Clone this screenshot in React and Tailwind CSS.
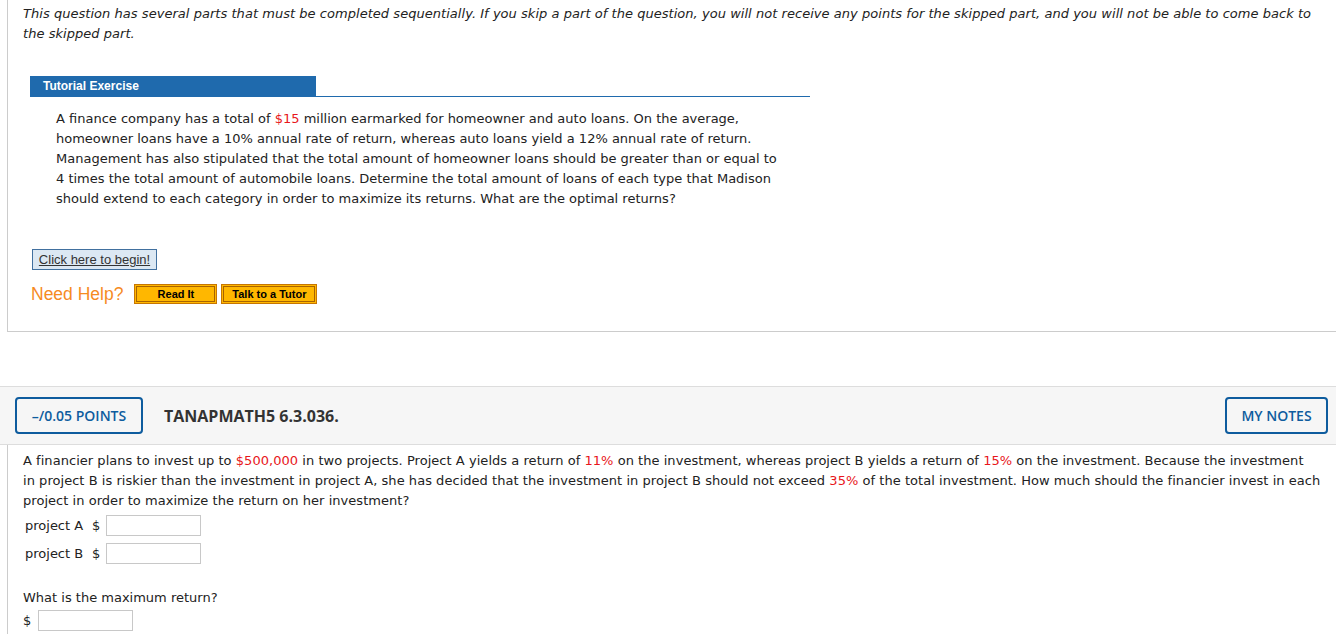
import React from 'react';

const verdana = { fontFamily: '"DejaVu Sans", Verdana, sans-serif' };

const Red = ({ children }) => <span className="text-[#e8161b]">{children}</span>;

const HelpButton = ({ label, width }) => (
  <button
    className={`h-[20px] ${width} border border-[#c77600] bg-[#ffb700] p-[1px] font-['Liberation_Sans',Arial,sans-serif] text-[11px] font-bold text-black`}
  >
    <span className="flex h-full w-full items-center justify-center border border-[#a86300]">{label}</span>
  </button>
);

const AnswerBox = () => (
  <span className="inline-block h-[21px] w-[95px] border border-[#c8c8c8] bg-white align-middle"></span>
);

export default function App() {
  return (
    <div className="min-h-[634px] w-[1336px] overflow-hidden bg-white text-[13px] leading-[20px] text-[#222]" style={verdana}>
      {/* previous question tail */}
      <div className="ml-[7px] h-[332px] border-b border-l border-[#cccccc] pl-[15px] pt-[4px]">
        <p className="whitespace-nowrap italic tracking-[0.04px]">
          This question has several parts that must be completed sequentially. If you skip a part of the question, you will not receive any points for the skipped part, and you will not be able to come back to
          <br />
          the skipped part.
        </p>

        <div className="ml-[7px] mt-[32px] w-[780px]">
          <div className="border-b border-[#1f6aad]">
            <div className="h-[20px] w-[286px] bg-[#1f6aad] pl-[13px] font-['Liberation_Sans',Arial,sans-serif] text-[12px] font-bold leading-[20px] text-white">
              Tutorial Exercise
            </div>
          </div>
          <p className="mt-[12px] whitespace-nowrap pl-[26px]">
            A finance company has a total of <Red>$15</Red> million earmarked for homeowner and auto loans. On the average,
            <br />
            homeowner loans have a 10% annual rate of return, whereas auto loans yield a 12% annual rate of return.
            <br />
            Management has also stipulated that the total amount of homeowner loans should be greater than or equal to
            <br />
            4 times the total amount of automobile loans. Determine the total amount of loans of each type that Madison
            <br />
            should extend to each category in order to maximize its returns. What are the optimal returns?
          </p>
        </div>

        <button className="ml-[9px] mt-[40px] h-[21px] w-[125px] border border-[#41709f] bg-[#dce8f3] font-['Liberation_Sans',Arial,sans-serif] text-[13px] leading-[19px] text-[#333] underline">
          Click here to begin!
        </button>

        <div className="ml-[8px] mt-[14px] flex items-center">
          <span className="mr-[11px] font-['Liberation_Sans',Arial,sans-serif] text-[17.5px] text-[#f68b1f]">Need Help?</span>
          <HelpButton label="Read It" width="w-[83px]" />
          <span className="w-[4px]"></span>
          <HelpButton label="Talk to a Tutor" width="w-[96px]" />
        </div>
      </div>

      {/* next question header */}
      <div className="mt-[54px] flex h-[59px] items-center justify-between border-y border-[#dddddd] bg-[#f6f6f6] pl-[15px] pr-[8px] font-['Open_Sans',sans-serif]">
        <div className="flex items-center">
          <span className="flex h-[37px] w-[128px] items-center justify-center rounded-[4px] border-2 border-[#0e5c9e] text-[14px] font-semibold text-[#0e5c9e]">
            –/0.05 POINTS
          </span>
          <span className="ml-[21px] text-[16px] font-bold text-[#333]">TANAPMATH5 6.3.036.</span>
        </div>
        <span className="flex h-[37px] w-[103px] items-center justify-center rounded-[4px] border-2 border-[#0e5c9e] text-[14px] font-semibold text-[#0e5c9e]">
          MY NOTES
        </span>
      </div>

      {/* question body */}
      <div className="ml-[7px] border-l border-[#cccccc] pb-[10px] pl-[15px] pt-[6px]">
        <p className="whitespace-nowrap tracking-[0.04px]">
          A financier plans to invest up to <Red>$500,000</Red> in two projects. Project A yields a return of <Red>11%</Red> on the investment, whereas project B yields a return of <Red>15%</Red> on the investment. Because the investment
          <br />
          in project B is riskier than the investment in project A, she has decided that the investment in project B should not exceed <Red>35%</Red> of the total investment. How much should the financier invest in each
          <br />
          project in order to maximize the return on her investment?
        </p>
        <div className="mt-[4px] flex items-center pl-[2px]">
          <span className="w-[67px]">project A</span>
          <span className="w-[14px]">$</span>
          <AnswerBox />
        </div>
        <div className="mt-[7px] flex items-center pl-[2px]">
          <span className="w-[67px]">project B</span>
          <span className="w-[14px]">$</span>
          <AnswerBox />
        </div>
        <p className="mt-[24px]">What is the maximum return?</p>
        <div className="mt-[2px] flex items-center">
          <span className="w-[15px]">$</span>
          <AnswerBox />
        </div>
      </div>
    </div>
  );
}
